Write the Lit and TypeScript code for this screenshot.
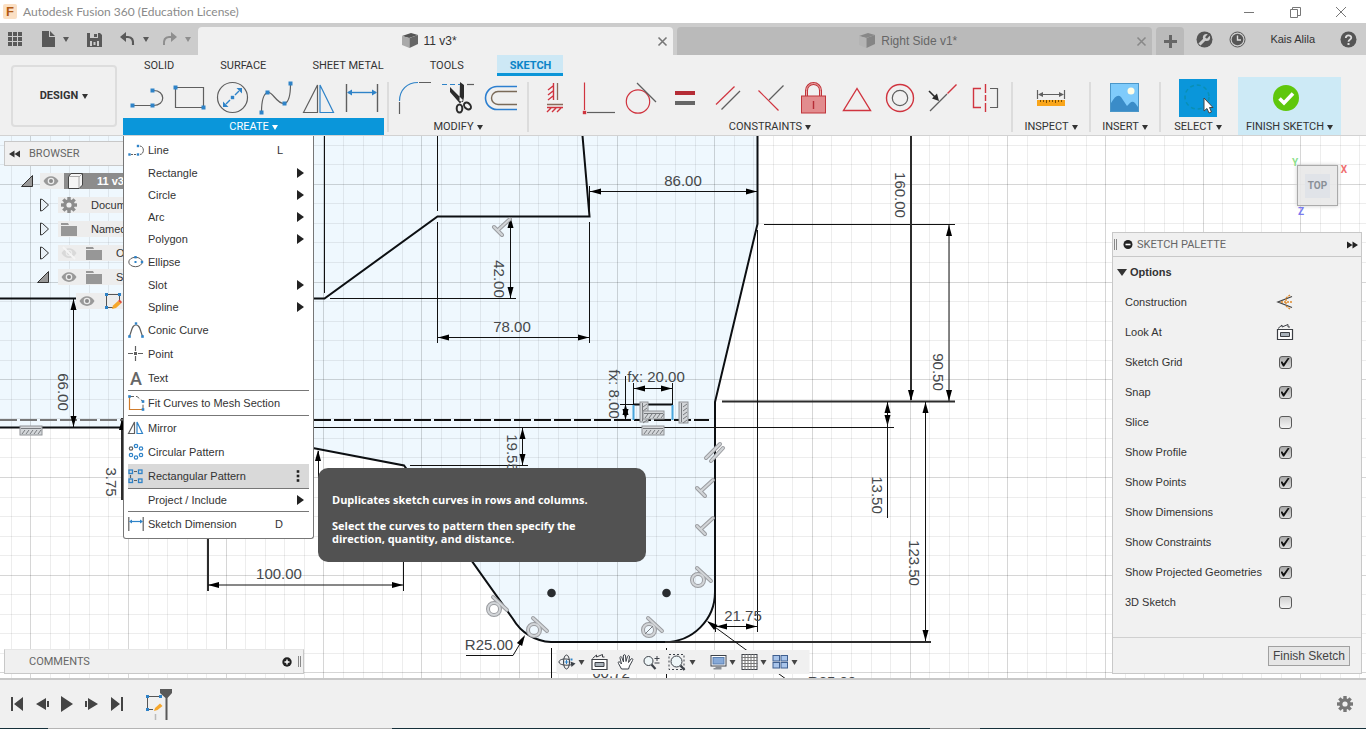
import { LitElement, html, svg, css, nothing } from "lit";
import { customElement } from "lit/decorators.js";

const BLUE = "#2f83c8";
const DARK = "#5f5f5f";
const RED = "#d0343f";

const icon = (w: number, h: number, body: unknown) =>
  html`<svg class="icon" width=${w} height=${h} viewBox="0 0 ${w} ${h}" aria-hidden="true">${body}</svg>`;

const dot = (x: number, y: number, s = 4, c = BLUE) =>
  svg`<rect x=${x - s / 2} y=${y - s / 2} width=${s} height=${s} fill=${c} />`;

const stroke = (d: string, c: string = DARK, w = 1.2) =>
  svg`<path d=${d} fill="none" stroke=${c} stroke-width=${w} />`;

const fill = (d: string, c: string) => svg`<path d=${d} fill=${c} />`;

/* ---------- ribbon icons, 32 x 32 ---------- */

const createIcons = [
  { name: "Line", body: svg`${stroke("M2 23.5H22M23 8.5C36 8 36 24 23 23.5")}${dot(2.5, 23.5)}${dot(22.5, 23.5)}${dot(22.5, 8.5)}` },
  { name: "Rectangle", body: svg`${stroke("M2.5 5.5H30.5V25.5H2.5Z")}${dot(2.5, 5.5)}${dot(30.5, 25.5)}` },
  {
    name: "Circle",
    body: svg`<circle cx="16.5" cy="15.5" r="15" fill="none" stroke=${DARK} stroke-width="1.2" />
      ${stroke("M10 22L14 18M19 13L23 9", BLUE, 1.4)}${fill("M7 25V19.5L12.5 25ZM26 6V11.5L20.500 6Z", BLUE)}${dot(16.5, 15.5, 3.4)}`,
  },
  {
    name: "Spline",
    body: svg`${stroke("M2.500 30.500C2.500 20 4 12 8.500 10.500C14 9 17 22 25.500 21.500C31 20 31.500 10 31.500 2")}
      ${dot(2.5, 30.5)}${dot(8.5, 10.5)}${dot(25.5, 21.5)}${dot(31.5, 1.5)}`,
  },
  { name: "Mirror", body: svg`${stroke("M1.500 30.500L15.500 3V30.500Z")}${stroke("M18 3L31.500 30.500H18Z", BLUE)}` },
  {
    name: "Dimension",
    body: svg`${stroke("M1.5 2V30M32.5 2V30", DARK, 1.4)}${stroke("M3 10.500H31", BLUE, 1.4)}
      ${fill("M2 10.500L7 7.500V13.500ZM32 10.500L27 7.500V13.500Z", BLUE)}`,
  },
];

const modifyIcons = [
  { name: "Fillet", body: svg`${stroke("M.5 19C.5 8 8 .5 19 .5", BLUE)}${stroke("M20 .5H32M.5 20V32")}` },
  {
    name: "Trim",
    body: svg`<path d="M0 2.500H24" fill="none" stroke=${BLUE} stroke-width="1.200" stroke-dasharray="5 3" />
      ${stroke("M25 2.500H32")}
      ${fill("M8 5V10L18 21.500L21 18ZM18 0L22 3V15L21 20L17.500 19Z", "#2b2b2b")}
      <ellipse cx="17.500" cy="26.500" rx="2.800" ry="4" fill="none" stroke="#2b2b2b" stroke-width="2" />
      <ellipse cx="25.500" cy="24" rx="2.800" ry="4" transform="rotate(-45 25.500 24)" fill="none" stroke="#2b2b2b" stroke-width="2" />`,
  },
  { name: "Offset", body: svg`${stroke("M32 4.500H12A11.500 11.500 0 0 0 12 27.500H32", "#2c7fd0", 1.6)}${stroke("M32 9.500H13A6.500 6.500 0 0 0 13 22.500H32", "#7a6a58", 1.4)}` },
];

const constraintIcons = [
  {
    name: "Horizontal/Vertical",
    body: svg`${stroke("M18.500 1V18M8 22.500H24", "#8a6a5a", 1.3)}${stroke("M14.500 1V18M14 4L9 8M14 9L9 13M14 14L9 18M8 25.500H24M12 26L8 30M17 26L13 30M22 26L18 30", RED, 1.4)}`,
  },
  { name: "Coincident", body: svg`${stroke("M2.500 .5V28", RED)}${dot(2.5, 30.5, 3.4, RED)}${stroke("M5 30.500H33")}` },
  { name: "Tangent", body: svg`<circle cx="13" cy="19.500" r="11.700" fill="none" stroke=${RED} stroke-width="1.200" />${stroke("M12 1L31 20")}` },
  { name: "Equal", body: svg`<rect x="7" y="9" width="20" height="4" fill="#b52c36" /><rect x="7" y="19" width="20" height="4" fill="#666" />` },
  { name: "Parallel", body: svg`${stroke("M5 22.500L23.500 4.500", RED)}${stroke("M10.500 27.500L29 9")}` },
  { name: "Perpendicular", body: svg`${stroke("M4.500 8.500L24.500 28.500", RED)}${stroke("M15 18L29.500 3.500")}` },
  {
    name: "Fix",
    body: svg`${stroke("M9.500 14V8.500A7 7 0 0 1 23.500 8.500V14", "#c0353b", 3)}${stroke("M9.500 14V8.500A7 7 0 0 1 23.500 8.500V14", "#ecb0b0", 1)}
      <rect x="4.500" y="14" width="24" height="17" fill="#e28c8e" stroke="#c0353b" />${stroke("M16.500 19V27", "#b52c36", 1.4)}`,
  },
  { name: "Midpoint", body: stroke("M17 6.500L3.500 28.500H30.500Z", RED, 1.4) },
  {
    name: "Concentric",
    body: svg`<circle cx="17" cy="16" r="13.500" fill="none" stroke=${RED} stroke-width="1.400" /><circle cx="17" cy="16" r="7.700" fill="none" stroke=${DARK} stroke-width="1.200" />`,
  },
  { name: "Collinear", body: svg`${stroke("M4 29L21 12")}${stroke("M21.500 11.500L30.500 2.500", RED, 1.4)}${stroke("M3 9L9 15", "#2b2b2b", 1.6)}${fill("M13 19L6 16.500L11 11.500Z", "#2b2b2b")}` },
  { name: "Symmetry", body: svg`${stroke("M12 6.500H4.500V25.500H12M16.500 2V11M16.500 13V19M16.500 21V30", RED, 1.4)}${stroke("M21 6.500H28.500V25.500H21")}` },
];

const inspectIcon = svg`${stroke("M2.500 8V17M29.500 8V17M4 12.500H28", DARK)}${fill("M3 12.500L8 10V15ZM29 12.500L24 10V15Z", DARK)}
  <rect x="2" y="18" width="28" height="6" fill="#f9a51a" />${stroke("M5.500 18V20M8.500 18V20M11.500 18V21M14.500 18V20M17.500 18V20M20.500 18V21M23.500 18V20M26.500 18V20", "#7d4f00", 1)}`;

const insertIcon = svg`<rect x="1.500" y="1.500" width="28" height="28" fill="#7fcbfb" stroke="#4b97c9" />
  <circle cx="22" cy="9" r="3.500" fill="#fffde6" />
  <path d="M2 21C6 14 9 12 12 15L18 24C21 21 23 18 26 21L29 25V29H2Z" fill="#3a8cc8" />`;

const selectIcon = svg`<circle cx="18" cy="18" r="12" fill="none" stroke="#0a8fb4" stroke-width="1.500" stroke-dasharray="4 3" />
  <path d="M25 19V32L28 29.500L30 34L32.500 33L30.500 28.500H34Z" fill="#fff" stroke="#444" stroke-width="1" />`;

const finishIcon = svg`<circle cx="16" cy="16" r="13" fill="#5fc70c" /><path d="M9.500 16.500L14 21L23 11.500" fill="none" stroke="#fff" stroke-width="3.600" />`;

/* ---------- small shared glyphs ---------- */

const caret = html`<span class="caret"></span>`;

const cube = (a: string, b: string, c: string) =>
  icon(18, 18, svg`<path d="M1 4L10 1L17 3L8 6Z" fill=${a} /><path d="M1 4L8.500 6V16L1 13Z" fill=${b} /><path d="M8.500 6L17 3V12L8.500 16Z" fill=${c} />`);

const eye = (off = false) =>
  icon(
    16,
    12,
    svg`<path d="M.5 6C4 -.5 12 -.5 15.500 6C12 12.500 4 12.500 .5 6Z" fill=${off ? "#d9d9d9" : "#999"} />
      <circle cx="8" cy="6" r="3.300" fill="#ececec" /><circle cx="8" cy="6" r="2" fill=${off ? "#d9d9d9" : "#8a8a8a"} />
      ${off ? stroke("M2 0L14 12", "#f5f5f5", 2) : nothing}`
  );

const folder = icon(16, 13, svg`<path d="M0 0H7L8 2H0ZM0 3H16V13H0Z" fill="#979797" />`);

const gear = (s: number, c: string) =>
  html`<svg class="icon" width=${s} height=${s} viewBox="-8 -8 16 16" aria-hidden="true">
    ${[0, 45, 90, 135].map((a) => svg`<rect x="-1.700" y="-8" width="3.400" height="16" fill=${c} transform="rotate(${a})" />`)}
    <circle r="4.300" fill="none" stroke=${c} stroke-width="3" /><circle r="2.600" fill="#f0f0f0" />
  </svg>`;

const sketchGlyph = icon(
  18,
  18,
  svg`${stroke("M3 2.500H14M2.500 4V14M4 15.500H9M15.500 4V9", "#555", 1)}${dot(2.5, 2.5, 3)}${dot(15.5, 2.5, 3)}${dot(2.5, 15.5, 3)}
    <path d="M8 17L9 13.500L14 9L17 11.500L12 16Z" fill="#f6a72c" /><path d="M14 9L15.500 7.500L18 10L17 11.500Z" fill="#e04a3a" />`
);

const openTri = icon(9, 14, svg`<path d="M.5 1V13L2.500 12.500L8.500 7L2.500 1.500Z" fill="#e8f0f6" stroke="#333" />`);
const closedTri = icon(12, 12, svg`<path d="M11.500 .5V11.500H.5Z" fill="#999" stroke="#333" />`);

const lookAt = icon(
  18,
  18,
  svg`<path d="M1.500 6.500H16.500V16.500H1.500Z" fill="#fff" stroke="#3c3f44" stroke-width="1.200" /><path d="M4.500 9.500H13.500V13.500H4.500Z" fill="#a9b2ba" stroke="#3c3f44" />
    <path d="M2 5.500L6 2V4L12 1.500V4H14" fill="none" stroke="#3c3f44" />`
);

/* ---------- create menu ---------- */

type Item = { label?: string; body?: unknown; key?: string; sub?: boolean; active?: boolean };

const menu: Item[] = [
  { label: "Line", key: "L", body: svg`<path d="M3 12.500H9" fill="none" stroke=${DARK} stroke-dasharray="2 1" />${stroke("M12 4C16.500 4.500 16.500 12 12 12.500", DARK, 1)}${dot(1.5, 12.5, 2.4)}${dot(10, 12.5, 2.4)}${dot(10, 4, 2.4)}` },
  { label: "Rectangle", sub: true },
  { label: "Circle", sub: true },
  { label: "Arc", sub: true },
  { label: "Polygon", sub: true },
  { label: "Ellipse", body: svg`<ellipse cx="7.500" cy="8" rx="6.700" ry="4.700" fill="none" stroke=${DARK} />${dot(7.5, 3.2, 2.4)}${dot(7.5, 8, 2)}${dot(14, 8, 2.4)}` },
  { label: "Slot", sub: true },
  { label: "Spline", sub: true },
  { label: "Conic Curve", body: svg`${stroke("M1.500 14C4 9 3.500 3 8 3C12.500 3 12 9 14.500 14")}${dot(1.5, 14.5, 2.6)}${dot(14.5, 14.5, 2.6)}${dot(8, 1.5, 2.4)}` },
  { label: "Point", body: svg`${stroke("M7.500 0V5M7.500 10V15M0 7.500H5M10 7.500H15")}${dot(7.5, 7.5, 3, DARK)}` },
  { label: "Text", body: svg`<text x="8" y="15" class="letter">A</text>` },
  {},
  { label: "Fit Curves to Mesh Section", body: svg`${stroke("M1.500 1V14.500H14.500", "#d07c2c")}<path d="M2 1.500H9L15 6.500V14" fill="none" stroke=${DARK} stroke-dasharray="4 2" />${dot(1.5, 1.5, 2.6)}${dot(15, 6.5, 2.6)}${dot(15, 14.5, 2.6)}` },
  {},
  { label: "Mirror", body: svg`${stroke("M.5 13.500L6.500 2V13.500Z")}${stroke("M9 2L14.500 13.500H9Z", BLUE)}` },
  {
    label: "Circular Pattern",
    body: svg`${[[8, 2, BLUE], [13, 4.5, BLUE], [13, 11, BLUE], [8, 13.5, BLUE], [3, 11, BLUE], [3, 4.5, DARK]].map(
      ([x, y, c]) => svg`<circle cx=${x} cy=${y} r="1.700" fill="none" stroke=${c} stroke-width="1.200" />`
    )}`,
  },
  {
    label: "Rectangular Pattern",
    active: true,
    body: svg`${[[1, 2], [10.5, 2], [1, 11], [10.5, 11]].map(([x, y]) => svg`<rect x=${x} y=${y} width="3.500" height="3.500" fill="none" stroke=${BLUE} stroke-width="1.300" />`)}
      ${stroke("M6 3.500H9M6 12.500H9M2.500 7V10", DARK, 1.2)}`,
  },
  {},
  { label: "Project / Include", sub: true },
  {},
  { label: "Sketch Dimension", key: "D", body: svg`${stroke("M.8 1V15M15.200 1V15")}${stroke("M2 5.500H14", BLUE)}${fill("M1 5.500L4 3.500V7.500ZM15 5.500L12 3.500V7.500Z", BLUE)}` },
];

/* ---------- sketch drawing ---------- */

const ORIGIN_Y = 136;
const CELL = 19.54;

const gridLines = () => {
  const out: unknown[] = [];
  for (let i = 0; i < 160; i++) {
    const x = Math.round(10.8 + i * CELL);
    out.push(svg`<rect x=${x} y="0" width="1" height="100%" class=${i % 5 === 1 ? "major" : "minor"} />`);
  }
  for (let i = 0; i < 100; i++) {
    const y = Math.round(8.8 + i * CELL);
    out.push(svg`<rect x="0" y=${y} width="100%" height="1" class=${i % 5 === 2 ? "major" : "minor"} />`);
  }
  return out;
};

const tip = (x: number, y: number, angle: number) =>
  svg`<path d="M0 0L-11 -3V3Z" transform="translate(${x} ${y}) rotate(${angle})" />`;
const hDim = (x1: number, x2: number, y: number) => svg`<path class="thin" d="M${x1} ${y}H${x2}" />${tip(x1, y, 180)}${tip(x2, y, 0)}`;
const vDim = (x: number, y1: number, y2: number) => svg`<path class="thin" d="M${x} ${y1}V${y2}" />${tip(x, y1, -90)}${tip(x, y2, 90)}`;
const label = (t: string, x: number, y: number) => svg`<text class="dim" x=${x} y=${y}>${t}</text>`;
const vLabel = (t: string, x: number, y: number) => svg`<text class="dim" transform="translate(${x} ${y}) rotate(90)" y="5">${t}</text>`;
const hatch = (x: number, y: number, w: number, h: number) => {
  const n = Math.max(w, h);
  const marks = Array.from({ length: Math.floor(n / 4) }, (_, i) => (w > h ? `M${2 + i * 4} ${h - 1}l3 -4` : `M${w - 1} ${2 + i * 4}l-4 3`)).join("");
  return svg`<g transform="translate(${x} ${y})"><rect width=${w} height=${h} class="mark" />
    <path class="markline" d=${(w > h ? `M1 2.500H${w - 1}` : `M2.500 1V${h - 1}`) + marks} /></g>`;
};
const perp = (x: number, y: number) =>
  svg`<g transform="translate(${x} ${y})"><path class="halo" d="M-8 1L0 9M-4 4L8 -7" /><path class="core" d="M-8 1L0 9M-4 4L8 -7" /></g>`;
const tangent = (x: number, y: number) =>
  svg`<g transform="translate(${x} ${y})"><circle r="6" cx="-2" cy="2" class="halo" /><path class="halo" d="M-3 -10L11 3" />
    <circle r="6" cx="-2" cy="2" class="core" /><path class="core" d="M-3 -10L11 3" /></g>`;

const drawing = svg`
  <g transform="translate(0 ${-ORIGIN_Y})">
    <path class="profile" d="M0 130H757V224L715 402V592A50 50 0 0 1 665 642H551A46 46 0 0 1 513 619L404 465L205 427H0Z" />
  </g>
  ${gridLines()}
  <g transform="translate(0 ${-ORIGIN_Y})">
    <path class="edge" d="M0 298.500H324.500L437.500 216.500H589.500L582 130" />
    <path class="edge" d="M757.500 130V224L715 402V592A50 50 0 0 1 665 642H551A46 46 0 0 1 513 619L404 465.500L205 427.500" />
    <path class="edge" d="M0 427.500H205" />
    <path class="mid" d="M665 642H931M722 401.500H955M122 418V500M208 539V591" />
    <path class="dash faint" d="M0 420H123" />
    <path class="dash" d="M314 420H709" />
    <path class="thin" d="M324.500 130V293M437.500 130V211M437.500 222V343M589.500 186V216M589.500 222V343M330 298.500H516M764 224.500H955M757.500 230V632M314 427.500H894M715.500 592V632M403.500 562V591M410 465.500H528M551.500 648V680M666.500 648V680M318.500 451V480" />
    ${tip(318, 450, -90)}${tip(122, 419, -90)}
    ${vDim(510.5, 217, 298)}${vLabel("42.00", 499, 279)}
    ${hDim(438, 589, 337.5)}${label("78.00", 512, 332)}
    ${hDim(590, 757, 191.5)}${label("86.00", 683, 186)}
    <path class="mid" d="M911 130V400" />${tip(911, 401, 90)}${vLabel("160.00", 900, 195)}
    ${vDim(949, 225, 401)}${vLabel("90.50", 938, 372)}
    ${vDim(887.5, 402, 426)}<path class="thin" d="M887.500 420V518" />${vLabel("13.50", 877, 495)}
    ${vDim(925.5, 402, 641)}${vLabel("123.50", 914, 563)}
    ${hDim(716, 757, 626.5)}${label("21.75", 743, 621)}
    ${hDim(208, 403, 585)}${label("100.00", 279, 579)}
    ${vDim(73.5, 299, 427)}${vLabel("66.00", 63, 392)}
    ${vLabel("3.75", 111, 482)}
    ${vDim(522.5, 428, 465)}${vLabel("19.55", 512, 453)}
    ${hDim(634, 672, 388.5)}${label("fx: 20.00", 656, 382)}
    ${vLabel("fx: 8.00", 614, 394)}
    <path class="thin" d="M625.500 376V420M633.500 383V404M672.500 383V404M620 404.500H634" /><path class="edge" d="M633 404.500H673" />
    ${tip(625.5, 404, -90)}${tip(625.5, 420, 90)}
    <path class="guide" d="M633.500 405V420M672.500 405V420" />
    ${label("R25.00", 489, 650)}<path class="thin" d="M466 655.500H513L524 637" />${tip(525, 635, -60)}
    <path class="thin" d="M708 622L790 682" />${tip(707, 621, -144)}${label("R25.00", 832, 687)}
    ${label("60.72", 611, 678)}
    ${hatch(640, 402, 8, 20)}${hatch(643, 411, 21, 8)}${hatch(679, 402, 9, 21)}${hatch(642, 426, 22, 9)}${hatch(20, 426, 22, 9)}
    ${perp(705, 487)}${perp(705, 525)}${perp(502, 226)}
    <path class="halo" d="M706 458L720 444M711 461L723 448" /><path class="core" d="M706 458L720 444M711 461L723 448" />
    ${tangent(496, 607)}${tangent(536, 628)}${tangent(651, 628)}${tangent(700, 578)}
    <path class="markline" d="M645 634L653 626" />
    <circle class="node" cx="551.500" cy="593" r="4.300" /><circle class="node" cx="666.500" cy="593" r="4.300" />
  </g>`;

const options: [string, boolean][] = [
  ["Sketch Grid", true],
  ["Snap", true],
  ["Slice", false],
  ["Show Profile", true],
  ["Show Points", true],
  ["Show Dimensions", true],
  ["Show Constraints", true],
  ["Show Projected Geometries", true],
  ["3D Sketch", false],
];

@customElement("app-root")
export class AppRoot extends LitElement {
  static styles = css`
    :host {
      display: flex;
      flex-direction: column;
      height: 100vh;
      overflow: hidden;
      background: #f0f0f0;
      color: #333;
      font: 11px/16px "Liberation Sans", Arial, sans-serif;
    }
    * { box-sizing: border-box; }
    button { font: inherit; color: inherit; background: none; border: 0; padding: 0; margin: 0; display: flex; align-items: center; justify-content: center; }
    h2, p, ul { margin: 0; padding: 0; font: inherit; list-style: none; }
    .icon { display: block; flex: none; overflow: visible; }
    .caret { width: 0; height: 0; border: 3px solid transparent; border-top: 5px solid currentColor; border-bottom: 0; flex: none; }
    .caps { font-family: Roboto, sans-serif; }
    .grow { flex: 1; }

    .titlebar { display: flex; align-items: center; height: 23px; flex: none; background: #fff; padding: 0 19px 0 3px; color: #8a8a8a; font: 12px/16px Lato, sans-serif; }
    .logo { width: 14px; height: 15px; margin-right: 6px; background: #fbe0c4; border-radius: 2px; color: #b35a12; font: bold 13px/15px "Liberation Sans", sans-serif; text-align: center; }
    .win { gap: 34px; display: flex; }

    .tabbar { display: flex; height: 32px; flex: none; background: #ccc; padding-top: 4px; gap: 4px; color: #333; }
    .quick { width: 194px; display: flex; align-items: center; padding: 0 4px 4px 8px; color: #595959; }
    .qgap { gap: 8px; }
    .quick .file { margin-left: 18px; }
    .quick .save { margin-left: 18px; }
    .quick .undo { margin-left: 18px; }
    .quick .redo { margin-left: 13px; color: #8e8e8e; }
    .doc { flex: 1; display: flex; align-items: center; justify-content: center; gap: 5px; background: #bababa; border-radius: 4px 4px 0 0; padding: 0 6px; color: #666; font: 12px/16px "Liberation Sans", sans-serif; }
    .doc.on { background: #f0f0f0; color: #333; }
    .doc .name { flex: 1; display: flex; gap: 5px; align-items: center; justify-content: center; }
    .plus { width: 28px; background: #bababa; border-radius: 4px 4px 0 0; color: #666; }
    .account { display: flex; align-items: center; gap: 16px; padding: 0 9px 4px 8px; }
    .account .user { margin: 0 9px 0 8px; }

    .ribbon { display: flex; flex: none; height: 81px; padding-left: 11px; border-bottom: 1px solid #d2d2d2; }
    .workspace { width: 106px; height: 62px; margin: 10px 6px 0 0; border: 2px solid #ddd; border-radius: 4px; font-weight: bold; gap: 4px; flex: none; }
    .bands { flex: 1; display: flex; flex-direction: column; }
    .rtabs { display: flex; height: 22px; gap: 21px; padding-left: 8px; }
    .rtabs button { height: 21px; padding: 1px 12px 0 13px; }
    .rtabs .on { color: #0b84c8; background: #cde8f5; box-shadow: inset 0 -3px #0b95d8; font-weight: bold; }
    .groups { display: flex; height: 59px; }
    .group { display: flex; flex-direction: column; padding-top: 5px; }
    .tools { display: flex; justify-content: center; gap: 11px; height: 32px; margin-bottom: 4px; }
    .glabel { height: 17px; gap: 3px; width: 100%; padding-top: 2px; }
    .rule { width: 2px; height: 50px; margin-top: 5px; background: #dcdcdc; flex: none; }
    .create { width: 261px; margin-right: 3px; }
    .create .glabel { background: #0a96da; color: #fff; }
    .modify { width: 138px; }
    .constraints { width: 482px; }
    .inspect { width: 76px; }
    .insert { width: 68px; }
    .select { width: 74px; padding-top: 2px; }
    .select .tools { height: 38px; margin-bottom: 1px; }
    .select .tools button { background: #0a96da; width: 38px; }
    .finish { width: 103px; background: #cdeaf6; margin-left: 3px; }
    .finish .tools { padding-right: 8px; }

    .canvas { position: relative; flex: 1; min-height: 0; overflow: hidden; background: #fff; }
    .sheet { position: absolute; inset: 0; width: 100%; height: 100%; }
    .minor { fill: rgba(0, 0, 0, 0.07); }
    .major { fill: rgba(0, 0, 0, 0.16); }
    .profile { fill: #eff8fe; }
    .edge { fill: none; stroke: #0c0f12; stroke-width: 2; }
    .mid { fill: none; stroke: #2c2c2c; stroke-width: 2; }
    .thin { fill: none; stroke: #111; stroke-width: 1; }
    .dash { fill: none; stroke: #111; stroke-width: 2; stroke-dasharray: 17 3; }
    .faint { stroke: #777; }
    .guide { stroke: #4aa6dc; stroke-width: 2; }
    .node { fill: #2a2d30; }
    .dim { font: 15px "Liberation Sans", sans-serif; fill: #45484b; text-anchor: middle; }
    .mark { fill: #d4d7da; stroke: #8f9296; }
    .markline { fill: none; stroke: #777a7e; }
    .halo { fill: none; stroke: #9a9ca0; stroke-width: 4; stroke-linecap: round; }
    .core { fill: none; stroke: #d2d5d8; stroke-width: 2; stroke-linecap: round; }
    .letter { font: 500 18px Roboto, sans-serif; fill: #666; text-anchor: middle; }

    .browser { position: absolute; left: 4px; top: 5px; width: 300px; }
    .panelhead { display: flex; align-items: center; height: 25px; background: #f0f0f0; border: 1px solid #c8c8c8; color: #666; }
    .browser .panelhead { padding-left: 4px; gap: 9px; }
    .tree { padding-top: 7px; display: grid; gap: 8px; }
    .tree li { display: flex; align-items: center; height: 16px; }
    .tree .body { display: flex; align-items: center; height: 16px; flex: 1; background: #ededed; padding-left: 3px; }
    .d0 { padding-left: 17px; } .d0 .body { margin-left: 7px; }
    .d1 { padding-left: 36px; } .d1 .body { margin-left: 9px; }
    .d1.open { padding-left: 33px; }
    .d2 { padding-left: 72px; }
    .rootname { flex: 1; display: flex; align-items: center; gap: 14px; margin-left: 5px; padding-left: 3px; background: #8c8c8c; color: #fff; font-weight: bold; }
    .tree .txt { margin-left: 14px; }
    .tree .f2 { margin-left: 9px; }

    .menu { position: absolute; left: 123px; top: 0; width: 191px; padding: 2px 4px; background: #fff; border: 1px solid #777; border-top: 0; border-radius: 0 0 3px 3px; z-index: 2; }
    .menu button { width: 100%; height: 24px; justify-content: flex-start; gap: 4px; padding-right: 5px; }
    .menu button.short { height: 22px; }
    .menu button.active { background: #d9d9d9; }
    .menu .pad { width: 16px; flex: none; }
    .menu hr { margin: 0; border: 0; border-top: 1px solid #777; }
    .menu .key { margin-right: 21px; }
    .subarrow { width: 0; height: 0; border: 5px solid transparent; border-left: 7px solid #222; border-right: 0; }

    .tip { position: absolute; left: 318px; top: 332px; width: 328px; padding: 25px 40px 17px 14px; background: #525252; border-radius: 10px; color: #fff; font: bold 11px/13px "Open Sans", sans-serif; display: grid; gap: 13px; z-index: 3; }

    .cube { position: absolute; right: 28px; top: 29px; width: 41px; height: 41px; background: rgba(232, 232, 232, 0.9); border: 1px solid #aaa; box-shadow: 0 0 4px #ccc; display: grid; place-items: center; color: #8a9097; font: bold 10px/24px Roboto, sans-serif; }
    .cube .face { background: #e0e3e8; padding: 0 3px; }
    .axis { position: absolute; font: bold 10px/10px Roboto, sans-serif; }
    .ay { left: -6px; top: -8px; color: #8ae08a; }
    .ax { right: -10px; top: -1px; color: #f07070; }
    .az { left: 0; bottom: -12px; color: #7a7af0; }

    .palette { position: absolute; right: 4px; top: 96px; bottom: 4px; width: 250px; display: flex; flex-direction: column; background: #f1f1f1; border: 1px solid #c8c8c8; }
    .palette .panelhead { height: 24px; border-width: 0 0 1px; padding: 0 3px 0 1px; gap: 4px; }
    .palette h2 { flex: 1; }
    .grip { width: 3px; height: 11px; border: solid #888; border-width: 0 1px; }
    .section { justify-content: flex-start; gap: 3px; height: 30px; padding-left: 4px; font-weight: bold; }
    .section .caret { border-width: 7px 5px 0; }
    .opt { display: flex; align-items: center; height: 30px; padding-left: 12px; }
    .opt > :first-child { flex: 1; }
    .opt .slot { width: 18px; margin-right: 67px; display: flex; justify-content: center; }
    .check { appearance: none; margin: 0; width: 13px; height: 13px; border: 1px solid #5a5a5a; border-radius: 3px; background: linear-gradient(#cfcfcf, #f4f4f4); display: grid; place-items: center; }
    .check:checked { background: linear-gradient(#a8a8a8, #dcdcdc); }
    .check:checked::before { content: ""; width: 9px; height: 9px; background: #111; clip-path: polygon(0 50%, 18% 42%, 35% 68%, 85% 0, 100% 8%, 40% 100%, 28% 100%); }
    .foot { margin-top: auto; height: 36px; border-top: 1px solid #d0d0d0; display: flex; align-items: center; justify-content: flex-end; padding-right: 11px; }
    .foot button { width: 82px; height: 20px; border: 1px solid #a0a0a0; background: #e6e6e6; font-size: 12px; color: #444; }

    .comments { position: absolute; left: 4px; bottom: 4px; width: 300px; padding: 0 2px 0 24px; gap: 6px; border-top-color: #e6e6e6; }
    .nav { position: absolute; left: 50%; transform: translateX(-50%); bottom: 4px; width: 253px; height: 24px; background: #f0f0f0; display: flex; align-items: center; padding-left: 2px; }
    .nav button { gap: 3px; color: #444; }
    .n1 { margin-left: 6px; } .n2 { margin-left: 9px; } .n3 { margin-left: 15px; } .n4 { margin-left: 6px; }

    .timeline { flex: none; height: 51px; border-top: 2px solid #c8c8c8; display: flex; align-items: center; padding: 0 13px 2px 10px; color: #444; }
    .play { display: flex; gap: 11px; }
    .feature { margin: 0 0 0 21px; display: flex; align-items: center; }
    .taskbar { position: absolute; left: 0; right: 0; bottom: 0; height: 1px; background: linear-gradient(90deg, #16303a 0 48px, #b4b4b4 48px 392px, #16303a 392px 930px, #999 930px 980px, #16303a 980px); }
  `;

  private tools(list: { name: string; body: unknown }[]) {
    return html`<div class="tools">${list.map((t) => html`<button aria-label=${t.name}>${icon(32, 32, t.body)}</button>`)}</div>`;
  }

  private group(cls: string, name: string, tools: unknown) {
    return html`<div class="group ${cls}">${tools}<button class="glabel caps">${name}${caret}</button></div>`;
  }

  private closeX(c: string) {
    return html`<button aria-label="Close tab">${icon(9, 9, stroke("M.5 .5L8.500 8.500M8.500 .5L.5 8.500", c, 1.6))}</button>`;
  }

  private renderHeader() {
    return html`
      <header class="titlebar">
        <span class="logo">F</span><span class="grow">Autodesk Fusion 360 (Education License)</span>
        <div class="win">
          <button aria-label="Minimize">${icon(12, 12, stroke("M1 6.500H11", "#777", 1))}</button>
          <button aria-label="Restore">${icon(12, 12, stroke("M1.500 3.500H8.500V11.500H1.500ZM3.500 3V1.500H11.500V9.500H9", "#777", 1))}</button>
          <button aria-label="Close">${icon(12, 12, stroke("M1 1L11 11M11 1L1 11", "#777", 1))}</button>
        </div>
      </header>
      <nav class="tabbar">
        <div class="quick">
          <button aria-label="Data panel">${icon(15, 15, svg`${[0, 5, 10].map((x) => [0, 5, 10].map((y) => svg`<rect x=${x} y=${y} width="4" height="4" fill="#595959" />`))}`)}</button>
          <button class="file qgap" aria-label="File">${icon(14, 16, svg`<path d="M1 0H8V6H14V16H1ZM9 0L14 5H9Z" fill="#595959" />`)}${caret}</button>
          <button class="save" aria-label="Save">${icon(15, 15, svg`<path d="M0 1H13L15 3V15H0Z" fill="#595959" /><path d="M3 1H11V6H3ZM3 9H12V14H3Z" fill="#ccc" /><path d="M7 2H10V5H7ZM5 9H10V14H5Z" fill="#595959" /><path d="M6.500 10H8.500V13H6.500Z" fill="#ccc" />`)}</button>
          <button class="undo qgap" aria-label="Undo">${icon(15, 14, svg`${stroke("M3 5H8C12 5 13.500 8 13 13", "#595959", 2.2)}${fill("M0 5L6 0V10Z", "#595959")}`)}${caret}</button>
          <button class="redo qgap" aria-label="Redo">${icon(15, 14, svg`${stroke("M12 5H7C3 5 1.500 8 2 13", "#8e8e8e", 2)}${fill("M15 5L9 0V10Z", "#8e8e8e")}`)}${caret}</button>
        </div>
        <div class="doc on"><span class="name">${cube("#555", "#aaa", "#666")}11 v3*</span>${this.closeX("#777")}</div>
        <div class="doc"><span class="name">${cube("#888", "#b4b4b4", "#858585")}Right Side v1*</span>${this.closeX("#888")}</div>
        <button class="plus" aria-label="New tab">${icon(13, 13, svg`<path d="M5 0H8V5H13V8H8V13H5V8H0V5H5Z" fill="#666" />`)}</button>
        <div class="account">
          <button aria-label="Extensions">${icon(17, 17, svg`<circle cx="8.500" cy="8.500" r="8" fill="#555" /><path d="M3.500 13.500L9 8" stroke="#ccc" stroke-width="3" /><circle cx="10.500" cy="6.500" r="3.600" fill="#ccc" /><path d="M10 7L14 2.500" stroke="#555" stroke-width="2.600" />`)}</button>
          <button aria-label="Job status">${icon(17, 17, svg`<circle cx="8.500" cy="8.500" r="7.500" fill="none" stroke="#555" /><circle cx="8.500" cy="8.500" r="5.800" fill="#555" />${stroke("M8.500 4.500V9H12", "#ddd", 1.4)}`)}</button>
          <button class="user">Kais Alila</button>
          <button aria-label="Help">${icon(17, 17, svg`<circle cx="8.500" cy="8.500" r="8" fill="#555" />${stroke("M5.800 7C5.800 3.500 11.300 3.500 11.300 6.800C11.300 8.500 8.500 8.500 8.500 10.800", "#ddd", 1.8)}${dot(8.5, 13, 2, "#ddd")}`)}</button>
        </div>
      </nav>`;
  }

  private renderRibbon() {
    return html`
      <section class="ribbon">
        <button class="workspace caps">DESIGN ${caret}</button>
        <div class="bands">
          <div class="rtabs caps">
            ${["SOLID", "SURFACE", "SHEET METAL", "TOOLS"].map((t) => html`<button>${t}</button>`)}
            <button class="on">SKETCH</button>
          </div>
          <div class="groups">
            ${this.group("create", "CREATE", this.tools(createIcons))}
            <span class="rule"></span>
            ${this.group("modify", "MODIFY", this.tools(modifyIcons))}
            <span class="rule"></span>
            ${this.group("constraints", "CONSTRAINTS", this.tools(constraintIcons))}
            <span class="rule"></span>
            ${this.group("inspect", "INSPECT", this.tools([{ name: "Measure", body: inspectIcon }]))}
            <span class="rule"></span>
            ${this.group("insert", "INSERT", this.tools([{ name: "Insert image", body: insertIcon }]))}
            <span class="rule"></span>
            ${this.group("select", "SELECT", html`<div class="tools"><button aria-label="Select">${icon(38, 38, selectIcon)}</button></div>`)}
            ${this.group("finish", "FINISH SKETCH", this.tools([{ name: "Finish", body: finishIcon }]))}
          </div>
        </div>
      </section>`;
  }

  private renderMenu() {
    return html`<div class="menu" role="menu">
      ${menu.map((m) =>
        m.label
          ? html`<button role="menuitem" class=${m.sub ? "short" : m.active ? "active" : ""}>
              ${m.body ? icon(16, 16, m.body) : html`<span class="pad"></span>`}${m.label}<span class="grow"></span>
              ${m.key ? html`<span class="key">${m.key}</span>` : nothing}${m.sub ? html`<span class="subarrow"></span>` : nothing}
              ${m.active ? icon(9, 12, svg`${dot(3, 1.5, 2.6, "#222")}${dot(3, 6, 2.6, "#222")}${dot(3, 10.5, 2.6, "#222")}`) : nothing}
            </button>`
          : html`<hr />`
      )}
    </div>`;
  }

  private renderBrowser() {
    return html`<aside class="browser">
      <div class="panelhead caps">${icon(11, 8, fill("M0 4L5.500 .5V7.500ZM5.500 4L11 .5V7.500Z", "#333"))}<h2>BROWSER</h2></div>
      <ul class="tree">
        <li class="d0">${closedTri}<div class="body">${eye()}<span class="rootname">${icon(16, 16, svg`<path d="M1.500 3.500L4 .5H15.500V12L12 15.500H1.500Z" fill="#f5f5f5" stroke="#444" />${stroke("M12 4V15M12 4L15 1M2 3.500H12", "#aaa", 1)}`)}11 v3</span></div></li>
        <li class="d1">${openTri}<div class="body">${gear(16, "#8c8c8c")}<span class="txt">Document Settings</span></div></li>
        <li class="d1">${openTri}<div class="body">${folder}<span class="txt">Named Views</span></div></li>
        <li class="d1">${openTri}<div class="body">${eye(true)}<span class="f2">${folder}</span><span class="txt">Origin</span></div></li>
        <li class="d1 open">${closedTri}<div class="body">${eye()}<span class="f2">${folder}</span><span class="txt">Sketches</span></div></li>
        <li class="d2"><div class="body">${eye()}<span class="f2">${sketchGlyph}</span></div></li>
      </ul>
    </aside>`;
  }

  private renderPalette() {
    return html`<aside class="palette">
      <div class="panelhead caps">
        <span class="grip"></span>
        ${icon(12, 9, svg`<circle cx="7" cy="4.500" r="4.500" fill="#222" />${stroke("M4.500 4.500H9.500", "#fff", 1.6)}`)}
        <h2>SKETCH PALETTE</h2>${icon(11, 8, fill("M0 .5L5.500 4L0 7.500ZM5.500 .5L11 4L5.500 7.500Z", "#222"))}
      </div>
      <button class="section">${caret}Options</button>
      <div class="opt"><span>Construction</span><button class="slot" aria-label="Construction">${icon(16, 14, svg`${stroke("M15 1.500L1 7L15 12.500", "#444", 1.3)}<path d="M4 7H16M9 3L13 0M9 11L13 14M9 4V10" fill="none" stroke="#e08a2c" stroke-width="1.400" stroke-dasharray="2 1" />`)}</button></div>
      <div class="opt"><span>Look At</span><button class="slot" aria-label="Look At">${lookAt}</button></div>
      ${options.map(([name, on], i) => html`<div class="opt"><label for="o${i}">${name}</label><span class="slot"><input class="check" type="checkbox" id="o${i}" ?checked=${on} /></span></div>`)}
      <div class="foot"><button>Finish Sketch</button></div>
    </aside>`;
  }

  private renderNav() {
    const c = "#3c4148";
    return html`<div class="nav">
      <button aria-label="Orbit">${icon(17, 16, svg`<ellipse cx="8" cy="8" rx="3" ry="7" fill="none" stroke=${c} /><path d="M11 5.500C4 4 .5 6 .5 8C.5 11 8 12 14 10.500" fill="none" stroke=${c} />${fill("M12 7.500L17 9.500L13 13Z", c)}${stroke("M8 6V10M6 8H10", BLUE, 1)}${dot(13, 5.5, 2)}`)}${caret}</button>
      <button class="n1" aria-label="Look at">${lookAt}</button>
      <button class="n2" aria-label="Pan">${icon(16, 16, svg`<path d="M4 15L1 9.500C0 7.500 2 7 3 9L4 10L2.500 4C2.500 2 4 2 4.500 4L6 8L5.800 2C6 .2 8 .2 8 2L8.500 7.500L10 2.500C10.500 1 12.200 1.500 12 3L11 8.500L13.500 5C14.500 4 16 5 15 6.500L12 12L11 15Z" fill="#fff" stroke=${c} />`)}</button>
      <button class="n2" aria-label="Zoom">${icon(17, 16, svg`<circle cx="6" cy="7" r="4.500" fill="#eef6f8" stroke=${c} />${stroke("M9 10.500L13 15", c, 2.2)}${stroke("M12 4.500H17M14.500 2V7M12 9H17", c, 1)}`)}</button>
      <button class="n2" aria-label="Zoom window">${icon(18, 17, svg`<rect x=".5" y=".5" width="15" height="15" fill="none" stroke=${c} stroke-dasharray="2 2" /><circle cx="8" cy="7.500" r="5.500" fill="#eef6f8" stroke=${c} />${stroke("M12 11.500L16 16", c, 2.4)}`)}${caret}</button>
      <button class="n3" aria-label="Display settings">${icon(16, 15, svg`<rect x=".5" y=".5" width="15" height="10.500" fill="#fff" stroke=${c} /><rect x="2.500" y="2.500" width="11" height="6.500" fill="#86a9d8" stroke="#5a7fb0" /><path d="M5 11.500H11V14.500H3V13H5Z" fill="#8a8f96" />`)}${caret}</button>
      <button class="n4" aria-label="Grid and snaps">${icon(16, 16, svg`<rect x=".5" y=".5" width="15" height="15" fill="#fff" stroke=${c} />${stroke("M3.500 0V16M6.500 0V16M9.500 0V16M12.500 0V16M0 3.500H16M0 6.500H16M0 9.500H16M0 12.500H16", "#777", 1)}`)}${caret}</button>
      <button class="n4" aria-label="Viewports">${icon(16, 14, svg`${[[0.5, 0.5], [8.5, 0.5], [0.5, 7.5], [8.5, 7.5]].map(([x, y]) => svg`<rect x=${x} y=${y} width="6.500" height="5.500" fill="#a8c4ea" stroke="#3f5f8f" />`)}`)}${caret}</button>
    </div>`;
  }

  render() {
    const c = "#444";
    return html`
      ${this.renderHeader()} ${this.renderRibbon()}
      <main class="canvas">
        <svg class="sheet" aria-label="Sketch">${drawing}</svg>
        ${this.renderBrowser()}
        <div class="cube caps"><span class="face">TOP</span><span class="axis ay">Y</span><span class="axis ax">X</span><span class="axis az">Z</span></div>
        ${this.renderPalette()}
        <div class="panelhead comments caps"><h2 class="grow">COMMENTS</h2>${icon(10, 10, svg`<circle cx="5" cy="5" r="4.700" fill="#222" />${stroke("M2.500 5H7.500M5 2.500V7.500", "#fff", 1.4)}`)}<span class="grip"></span></div>
        ${this.renderNav()} ${this.renderMenu()}
        <div class="tip" role="tooltip">
          <p>Duplicates sketch curves in rows and columns.</p>
          <p>Select the curves to pattern then specify the direction, quantity, and distance.</p>
        </div>
      </main>
      <footer class="timeline">
        <div class="play">
          <button aria-label="Go to start">${icon(14, 14, fill("M1 0H3V14H1ZM13 0V14L4 7Z", c))}</button>
          <button aria-label="Step back">${icon(14, 14, fill("M11 1V13L1 7ZM12 4H14V10H12Z", c))}</button>
          <button aria-label="Play">${icon(14, 16, fill("M1 0V16L13 8Z", c))}</button>
          <button aria-label="Step forward">${icon(14, 14, fill("M3 1V13L13 7ZM0 4H2V10H0Z", c))}</button>
          <button aria-label="Go to end">${icon(14, 14, fill("M1 0V14L10 7ZM11 0H13V14H11Z", c))}</button>
        </div>
        <button class="feature" aria-label="Sketch feature">${icon(28, 32, svg`${stroke("M3 8.500H14M2.500 10V20M4 21.500H8", "#555", 1)}${dot(2.5, 8.5, 3)}${dot(15.5, 8.5, 3)}${dot(2.5, 21.5, 3)}<path d="M9 23L10 20L15 15.500L17.500 18L12.500 22Z" fill="#f6a72c" />${stroke("M10.500 26V32", "#bbb", 1.5)}${fill("M15 1H27V5L22.500 10V32H20.500V10L15 5Z", "#595959")}`)}</button>
        <span class="grow"></span>
        <button aria-label="Timeline settings">${gear(16, "#777")}</button>
      </footer>
      <div class="taskbar"></div>`;
  }
}
